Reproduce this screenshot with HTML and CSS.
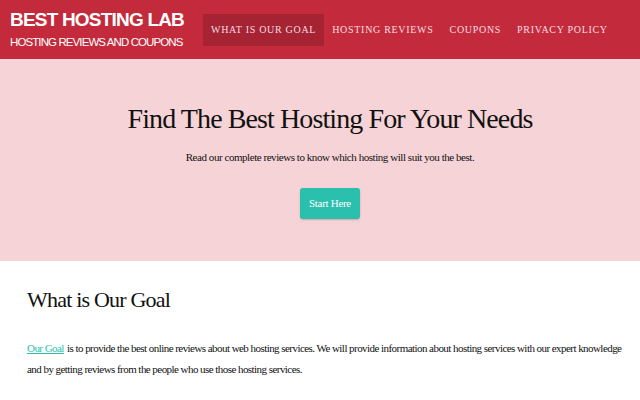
FILE: index.html
```html
<!DOCTYPE html>
<html lang="en">
<head>
    <meta charset="UTF-8">
    <meta name="viewport" content="width=device-width, initial-scale=1.0">
    <title>Best Hosting Lab</title>
    <link rel="stylesheet" href="styles.css">
</head>
<body>

<header class="site-header">
    <div class="brand">
        <div class="brand-title">BEST HOSTING LAB</div>
        <div class="brand-tagline">HOSTING REVIEWS AND COUPONS</div>
    </div>
    <nav class="main-nav">
        <a href="#goal" class="active">What is Our Goal</a>
        <a href="#reviews">Hosting Reviews</a>
        <a href="#coupons">Coupons</a>
        <a href="#privacy">Privacy Policy</a>
    </nav>
</header>

<section class="hero">
    <h1>Find The Best Hosting For Your Needs</h1>
    <p>Read our complete reviews to know which hosting will suit you the best.</p>
    <a href="#reviews" class="btn">Start Here</a>
</section>

<section class="content" id="goal">
    <h2>What is Our Goal</h2>
    <p><a href="#goal">Our Goal</a> is to provide the best online reviews about web hosting services. We will provide information about hosting services with our expert knowledge and by getting reviews from the people who use those hosting services.</p>
</section>

</body>
</html>
```

FILE: styles.css
```css
body {
    margin: 0;
    font-family: "Liberation Serif", "Times New Roman", serif;
    color: #111;
    background: #fff;
}

/* top bar */
.site-header {
    display: flex;
    align-items: center;
    height: 59px;
    background: #c32b3c;
    color: #fff;
}
.brand {
    padding: 0 0 0 10px;
    width: 193px;
    white-space: nowrap;
}
.brand-title {
    font-family: "Liberation Sans", Arial, sans-serif;
    font-weight: bold;
    font-size: 19px;
    letter-spacing: -0.8px;
    line-height: 22px;
}
.brand-tagline {
    font-family: "Liberation Sans", Arial, sans-serif;
    font-size: 11.5px;
    letter-spacing: -0.9px;
    line-height: 18px;
    margin-top: 2px;
}
.main-nav {
    display: flex;
}
.main-nav a {
    display: block;
    padding: 0 8px;
    line-height: 32px;
    color: #f7dde0;
    text-decoration: none;
    text-transform: uppercase;
    font-size: 10px;
    letter-spacing: 0.7px;
}
.main-nav a.active {
    background: #a52333;
}

/* banner */
.hero {
    background: #f6d3d6;
    height: 202px;
    padding: 0 7px 0 27px;
    text-align: center;
    overflow: hidden;
}
.hero h1 {
    margin: 42px 0 0;
    font-weight: normal;
    font-size: 28px;
    letter-spacing: -0.9px;
    line-height: 36px;
}
.hero p {
    margin: 14px 0 0;
    font-size: 11px;
    letter-spacing: -0.45px;
}
.btn {
    display: inline-block;
    margin-top: 25px;
    padding: 0 9px;
    line-height: 31px;
    background: #2bbfae;
    color: #fff;
    font-size: 11px;
    letter-spacing: -0.3px;
    text-decoration: none;
    border-radius: 3px;
    box-shadow: 0 1px 2px rgba(0, 0, 0, 0.2);
}

/* text section */
.content {
    padding: 0 4px 0 27px;
}
.content h2 {
    margin: 26px 0 0;
    font-weight: normal;
    font-size: 22px;
    letter-spacing: -0.8px;
}
.content p {
    margin: 25px 0 0;
    font-size: 11px;
    letter-spacing: -0.55px;
    line-height: 21px;
}
.content p a {
    color: #2bbfae;
    padding-right: 1px;
}
```
